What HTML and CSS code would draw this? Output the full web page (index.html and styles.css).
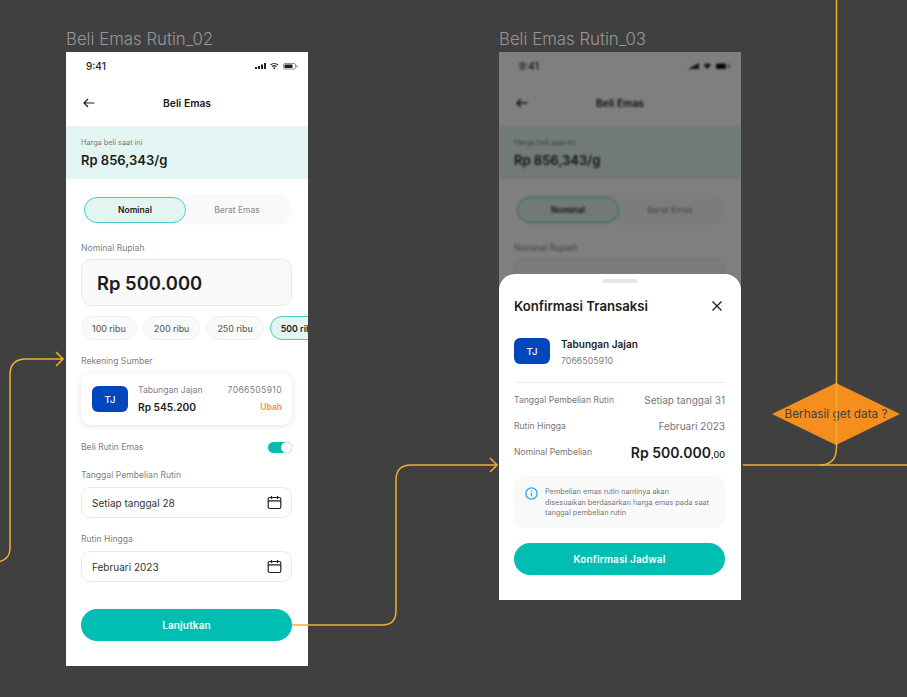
FILE: index.html
```html
<!DOCTYPE html>
<html lang="en">
<head>
    <meta charset="UTF-8">
    <meta name="viewport" content="width=device-width, initial-scale=1.0">
    <title>Beli Emas Rutin</title>
    <link rel="stylesheet" href="styles.css">
</head>
<body>

    <div class="canvas">

        <!-- Frame 02 -->
        <div class="frame-title title-02">Beli Emas Rutin_02</div>
        <div class="frame frame-02">
            <div class="status-bar">
                <span class="time">9:41</span>
                <svg class="status-icons" width="44" height="8" viewBox="0 0 44 8">
                    <rect x="0" y="5" width="2" height="2" fill="#222"/>
                    <rect x="3" y="4" width="2" height="3" fill="#222"/>
                    <rect x="6" y="2.5" width="2" height="4.5" fill="#222"/>
                    <rect x="9" y="1" width="2" height="6" fill="#222"/>
                    <path d="M15.5 3a5.5 5.5 0 0 1 7.5 0M17 4.700a3.300 3.300 0 0 1 4.500 0" fill="none" stroke="#222" stroke-width="1.100"/>
                    <path d="M18 6l1.250-1 1.250 1-1.250 1.200z" fill="#222"/>
                    <rect x="28.500" y="1.500" width="12" height="5.500" rx="1.500" fill="none" stroke="#777" stroke-width=".8"/>
                    <rect x="29.500" y="2.500" width="8" height="3.500" rx=".6" fill="#222"/>
                    <rect x="41.500" y="3" width="1" height="2.500" fill="#777"/>
                </svg>
            </div>
            <div class="app-header">
                <svg class="back-icon" width="12" height="10" viewBox="0 0 12 10">
                    <path d="M11.500 5H1M5 1L1 5l4 4" fill="none" stroke="#1c1c1c" stroke-width="1.200"/>
                </svg>
                <span class="app-title">Beli Emas</span>
            </div>
            <div class="price-band">
                <div class="price-label">Harga beli saat ini</div>
                <div class="price-value">Rp 856,343/g</div>
            </div>
            <div class="segment">
                <div class="segment-item active">Nominal</div>
                <div class="segment-item">Berat Emas</div>
            </div>
            <div class="form-body">
                <div class="field-label">Nominal Rupiah</div>
                <div class="amount-box">Rp 500.000</div>
                <div class="chips">
                    <span class="chip">100 ribu</span>
                    <span class="chip">200 ribu</span>
                    <span class="chip">250 ribu</span>
                    <span class="chip active">500 ribu</span>
                </div>
                <div class="field-label source-label">Rekening Sumber</div>
                <div class="account-card">
                    <div class="avatar">TJ</div>
                    <div class="account-info">
                        <div class="account-name">Tabungan Jajan</div>
                        <div class="account-balance">Rp 545.200</div>
                    </div>
                    <div class="account-side">
                        <div class="account-name account-number">7066505910</div>
                        <div class="account-change">Ubah</div>
                    </div>
                </div>
                <div class="toggle-row">
                    <span class="field-label">Beli Rutin Emas</span>
                    <span class="toggle"><span class="knob"></span></span>
                </div>
                <div class="field-label date-label">Tanggal Pembelian Rutin</div>
                <div class="date-field">
                    <span>Setiap tanggal 28</span>
                    <svg width="15" height="15" viewBox="0 0 15 15">
                        <rect x="1.200" y="2.500" width="12.600" height="11" rx="1.500" fill="none" stroke="#222" stroke-width="1.200"/>
                        <path d="M1.200 5.800h12.600M4.500 1v3M10.500 1v3" fill="none" stroke="#222" stroke-width="1.200"/>
                    </svg>
                </div>
                <div class="field-label date-label second">Rutin Hingga</div>
                <div class="date-field">
                    <span>Februari 2023</span>
                    <svg width="15" height="15" viewBox="0 0 15 15">
                        <rect x="1.200" y="2.500" width="12.600" height="11" rx="1.500" fill="none" stroke="#222" stroke-width="1.200"/>
                        <path d="M1.200 5.800h12.600M4.500 1v3M10.500 1v3" fill="none" stroke="#222" stroke-width="1.200"/>
                    </svg>
                </div>
                <button class="primary-btn next-btn">Lanjutkan</button>
            </div>
        </div>

        <!-- Frame 03 -->
        <div class="frame-title title-03">Beli Emas Rutin_03</div>
        <div class="frame frame-03">
            <div class="backdrop">
                <div class="status-bar">
                    <span class="time">9:41</span>
                    <svg class="status-icons" width="44" height="8" viewBox="0 0 44 8">
                        <path d="M0 7l11-6v6z" fill="#222"/>
                        <path d="M15.500 3a5.500 5.500 0 0 1 7.500 0L19.250 7z" fill="#222"/>
                        <rect x="28" y="1.500" width="10" height="5.500" rx="1.500" fill="#111"/>
                        <rect x="40" y="2" width="2" height="4" fill="#888"/>
                    </svg>
                </div>
                <div class="app-header">
                    <svg class="back-icon" width="12" height="10" viewBox="0 0 12 10">
                        <path d="M11.500 5H1M5 1L1 5l4 4" fill="none" stroke="#1c1c1c" stroke-width="1.400"/>
                    </svg>
                    <span class="app-title">Beli Emas</span>
                </div>
                <div class="price-band">
                    <div class="price-label">Harga beli saat ini</div>
                    <div class="price-value">Rp 856,343/g</div>
                </div>
                <div class="segment">
                    <div class="segment-item active">Nominal</div>
                    <div class="segment-item">Berat Emas</div>
                </div>
                <div class="form-body">
                    <div class="field-label">Nominal Rupiah</div>
                    <div class="amount-box">Rp 500.000</div>
                </div>
            </div>
            <div class="dim"></div>

            <div class="sheet">
                <div class="handle"></div>
                <div class="sheet-head">
                    <span class="sheet-title">Konfirmasi Transaksi</span>
                    <svg width="12" height="12" viewBox="0 0 12 12">
                        <path d="M1.500 1.500l9 9M10.500 1.500l-9 9" fill="none" stroke="#1c1c1c" stroke-width="1.300"/>
                    </svg>
                </div>
                <div class="sheet-account">
                    <div class="avatar">TJ</div>
                    <div>
                        <div class="sheet-name">Tabungan Jajan</div>
                        <div class="sheet-number">7066505910</div>
                    </div>
                </div>
                <div class="detail-row">
                    <span class="detail-label">Tanggal Pembelian Rutin</span>
                    <span class="detail-value">Setiap tanggal 31</span>
                </div>
                <div class="detail-row">
                    <span class="detail-label">Rutin Hingga</span>
                    <span class="detail-value">Februari 2023</span>
                </div>
                <div class="detail-row">
                    <span class="detail-label">Nominal Pembelian</span>
                    <span class="detail-total">Rp 500.000<small>,00</small></span>
                </div>
                <div class="info-box">
                    <svg width="13" height="13" viewBox="0 0 13 13">
                        <circle cx="6.500" cy="6.500" r="5.600" fill="none" stroke="#1fa8ee" stroke-width="1.200"/>
                        <path d="M6.500 5.800v3.400M6.500 3.600v1" fill="none" stroke="#1fa8ee" stroke-width="1.200"/>
                    </svg>
                    <p>Pembelian emas rutin nantinya akan<br>disesuaikan berdasarkan harga emas pada saat<br>tanggal pembelian rutin</p>
                </div>
                <button class="primary-btn">Konfirmasi Jadwal</button>
            </div>
        </div>

        <!-- Flow connectors -->
        <div class="decision">Berhasil get data ?</div>
        <svg class="connectors" width="907" height="697" viewBox="0 0 907 697">
            <g fill="none" stroke="#f0ae2e" stroke-width="1.500">
                <path d="M0 561.500Q10 559 10 548V375Q10 359 26 359H63"/>
                <path d="M56 352l7 7-7 7"/>
                <path d="M292 625H382Q396 625 396 611V480Q396 465 411 465H497"/>
                <path d="M490 458l7 7-7 7"/>
                <path d="M743 465H907"/>
                <path d="M836.500 0V447Q836.500 465 820 465"/>
            </g>
        </svg>
    </div>

</body>
</html>
```

FILE: styles.css
```css
* {
    box-sizing: border-box;
}

html, body {
    margin: 0;
    padding: 0;
}

body {
    font-family: Inter, "Liberation Sans", sans-serif;
    background-color: #404040;
    color: #1c1c1c;
    overflow: hidden;
}

.canvas {
    position: relative;
    width: 907px;
    height: 697px;
    background-color: #404040;
    overflow: hidden;
}

/* Frames sit on a free canvas */
.frame-title {
    position: absolute;
    top: 29px;
    font-size: 16.800px;
    line-height: 20px;
    font-weight: 300;
    color: #979797;
}

.title-02 {
    left: 66px;
}

.title-03 {
    left: 499px;
}

.frame {
    position: absolute;
    top: 52px;
    width: 242px;
    background-color: #fff;
    overflow: hidden;
}

.frame-02 {
    left: 66px;
    height: 614px;
}

.frame-03 {
    left: 499px;
    height: 548px;
}

.connectors {
    position: absolute;
    left: 0;
    top: 0;
    pointer-events: none;
}

/* Status and header */
.status-bar {
    display: flex;
    justify-content: space-between;
    align-items: center;
    height: 28px;
    padding: 0 9px 0 20px;
}

.time {
    font-size: 10px;
    font-weight: 500;
}

.app-header {
    position: relative;
    display: flex;
    justify-content: center;
    align-items: center;
    height: 46px;
}

.back-icon {
    position: absolute;
    left: 17px;
    top: 18px;
}

.app-title {
    font-size: 10.300px;
    font-weight: 600;
}

.price-band {
    height: 53px;
    padding: 12px 15px 0;
    background-color: #e3f5f3;
}

.price-label {
    font-size: 7.300px;
    line-height: 10px;
    color: #777;
}

.price-value {
    margin-top: 3px;
    font-size: 13px;
    line-height: 18px;
    font-weight: 600;
}

.segment {
    display: flex;
    align-items: center;
    height: 31px;
    margin: 15px 16px 0 18px;
    background-color: #f9f9f9;
    border-radius: 16px;
}

.segment-item {
    display: flex;
    justify-content: center;
    align-items: center;
    width: 102px;
    height: 26px;
    font-size: 8.500px;
    color: #888;
    border-radius: 13px;
}

.segment-item.active {
    color: #1c1c1c;
    font-weight: 600;
    background-color: #e3f5f3;
    border: 1px solid #45d0c5;
}

/* Form */
.form-body {
    padding: 17px 16px 0 15px;
}

.field-label {
    font-size: 8.600px;
    line-height: 12px;
    color: #808080;
}

.amount-box {
    display: flex;
    align-items: center;
    height: 47px;
    margin-top: 5px;
    padding-left: 15px;
    font-size: 18.400px;
    font-weight: 600;
    background-color: #f9f9f9;
    border: 1px solid #e9e9e9;
    border-radius: 10px;
}

.chips {
    display: flex;
    gap: 6px;
    margin-top: 10px;
    width: 260px;
}

.chip {
    display: flex;
    align-items: center;
    flex-shrink: 0;
    height: 24px;
    padding: 0 10px;
    font-size: 8.800px;
    font-weight: 500;
    color: #666;
    white-space: nowrap;
    background-color: #f8fafa;
    border: 1px solid #ebf3f2;
    border-radius: 12px;
}

.chip.active {
    color: #1c1c1c;
    font-weight: 600;
    background-color: #e3f5f3;
    border-color: #45d0c5;
}

.source-label {
    margin-top: 15px;
}

.account-card {
    display: flex;
    align-items: center;
    height: 52px;
    margin-top: 6px;
    padding: 0 10px 0 11px;
    background-color: #fff;
    border-radius: 10px;
    box-shadow: 0 1px 6px rgba(0, 0, 0, 0.12);
}

.avatar {
    display: flex;
    justify-content: center;
    align-items: center;
    flex-shrink: 0;
    width: 36px;
    height: 26px;
    font-size: 9.500px;
    font-weight: 500;
    color: #fff;
    background-color: #0047bb;
    border-radius: 6px;
}

.account-info {
    flex: 1;
    margin-left: 10px;
}

.account-side {
    text-align: right;
}

.account-name {
    font-size: 8.600px;
    line-height: 12px;
    color: #808080;
}

.account-number {
    letter-spacing: 0.35px;
}

.account-balance {
    margin-top: 4px;
    font-size: 10.200px;
    line-height: 14px;
    font-weight: 600;
}

.account-change {
    margin-top: 4px;
    font-size: 8.500px;
    line-height: 14px;
    font-weight: 600;
    color: #f7941d;
}

.toggle-row {
    display: flex;
    justify-content: space-between;
    align-items: center;
    margin-top: 15px;
    height: 14px;
}

.toggle {
    position: relative;
    width: 24px;
    height: 11px;
    background-color: #00bfb2;
    border-radius: 6px;
}

.knob {
    position: absolute;
    right: 0;
    top: 0;
    width: 11px;
    height: 11px;
    background-color: #fff;
    border-radius: 50%;
    box-shadow: 0 0 2px rgba(0, 0, 0, 0.3);
}

.date-label {
    margin-top: 15px;
}

.date-field {
    display: flex;
    justify-content: space-between;
    align-items: center;
    height: 31px;
    margin-top: 6px;
    padding: 0 9px 0 10px;
    font-size: 10px;
    color: #333;
    border: 1px solid #e9e9e9;
    border-radius: 9px;
}

.primary-btn {
    display: block;
    width: 100%;
    height: 32px;
    padding: 0;
    font-family: inherit;
    font-size: 10px;
    font-weight: 600;
    letter-spacing: 0.15px;
    color: #fff;
    background-color: #00bfb2;
    border: none;
    border-radius: 16px;
}

.next-btn {
    margin-top: 27px;
}

/* Blurred page behind the sheet */
.backdrop {
    filter: blur(1.300px);
}

.dim {
    position: absolute;
    inset: 0;
    background-color: rgba(0, 0, 0, 0.5);
}

.sheet {
    position: absolute;
    left: 0;
    right: 0;
    top: 222px;
    bottom: 0;
    padding: 5px 16px 0 15px;
    background-color: #fff;
    border-radius: 16px 16px 0 0;
}

.handle {
    width: 36px;
    height: 4px;
    margin: 0 auto;
    background-color: #e6e6e6;
    border-radius: 2px;
}

.sheet-head {
    display: flex;
    justify-content: space-between;
    align-items: center;
    height: 20px;
    margin-top: 13px;
    padding-right: 2px;
}

.sheet-title {
    font-size: 13.200px;
    font-weight: 600;
}

.sheet-account {
    display: flex;
    gap: 11px;
    height: 45px;
    margin-top: 22px;
    border-bottom: 1px solid #ececec;
}

.sheet-name {
    font-size: 10px;
    line-height: 12px;
    font-weight: 600;
}

.sheet-number {
    margin-top: 5px;
    font-size: 8.800px;
    line-height: 12px;
    color: #808080;
}

.detail-row {
    display: flex;
    justify-content: space-between;
    align-items: center;
    height: 26px;
}

.sheet-account + .detail-row {
    margin-top: 4px;
}

.detail-label {
    font-size: 8.600px;
    color: #777;
}

.detail-value {
    font-size: 10px;
    color: #777;
}

.detail-total {
    font-size: 14px;
    font-weight: 600;
}

.detail-total small {
    font-size: 9px;
    font-weight: 500;
}

.info-box {
    display: flex;
    gap: 7px;
    height: 52px;
    margin-top: 11px;
    padding: 11px 6px 0 11px;
    background-color: #f9f9f9;
    border-radius: 10px;
}

.info-box svg {
    flex-shrink: 0;
}

.info-box p {
    margin: 0;
    font-size: 7.300px;
    line-height: 10.500px;
    white-space: nowrap;
    color: #777;
}

.sheet .primary-btn {
    margin-top: 15px;
}

/* Decision node */
.decision {
    position: absolute;
    left: 772px;
    top: 383px;
    display: flex;
    justify-content: center;
    align-items: center;
    width: 128px;
    height: 62px;
    font-size: 11.800px;
    color: #404040;
    background-color: #f68e1e;
    clip-path: polygon(50% 0, 100% 50%, 50% 100%, 0 50%);
}
```
